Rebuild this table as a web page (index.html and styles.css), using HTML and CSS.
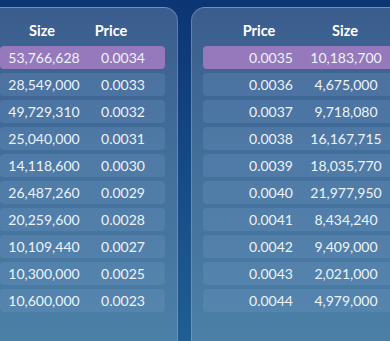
FILE: index.html
```html
<!DOCTYPE html>
<html>
<head>
<meta charset="utf-8">
<link rel="stylesheet" href="styles.css">
</head>
<body>
<div class="board">
  <section class="panel panel-left">
    <div class="head head-left"><span>Size</span><span>Price</span></div>
    <div class="row row-left hl"><span>53,766,628</span><span>0.0034</span></div>
    <div class="row row-left"><span>28,549,000</span><span>0.0033</span></div>
    <div class="row row-left"><span>49,729,310</span><span>0.0032</span></div>
    <div class="row row-left"><span>25,040,000</span><span>0.0031</span></div>
    <div class="row row-left"><span>14,118,600</span><span>0.0030</span></div>
    <div class="row row-left"><span>26,487,260</span><span>0.0029</span></div>
    <div class="row row-left"><span>20,259,600</span><span>0.0028</span></div>
    <div class="row row-left"><span>10,109,440</span><span>0.0027</span></div>
    <div class="row row-left"><span>10,300,000</span><span>0.0025</span></div>
    <div class="row row-left"><span>10,600,000</span><span>0.0023</span></div>
  </section>
  <section class="panel panel-right">
    <div class="head head-right"><span>Price</span><span>Size</span></div>
    <div class="row row-right hl"><span>0.0035</span><span>10,183,700</span></div>
    <div class="row row-right"><span>0.0036</span><span>4,675,000</span></div>
    <div class="row row-right"><span>0.0037</span><span>9,718,080</span></div>
    <div class="row row-right"><span>0.0038</span><span>16,167,715</span></div>
    <div class="row row-right"><span>0.0039</span><span>18,035,770</span></div>
    <div class="row row-right"><span>0.0040</span><span>21,977,950</span></div>
    <div class="row row-right"><span>0.0041</span><span>8,434,240</span></div>
    <div class="row row-right"><span>0.0042</span><span>9,409,000</span></div>
    <div class="row row-right"><span>0.0043</span><span>2,021,000</span></div>
    <div class="row row-right"><span>0.0044</span><span>4,979,000</span></div>
  </section>
</div>
</body>
</html>
```
FILE: styles.css
```css
html, body {
  margin: 0;
  padding: 0;
  width: 390px;
  height: 341px;
  overflow: hidden;
}
body {
  background: linear-gradient(180deg, #0c3573 0%, #164a85 50%, #215e91 100%);
  font-family: Lato, "Open Sans", sans-serif;
  color: #eef3f9;
}
.board {
  display: flex;
  gap: 13px;
  padding-top: 7px;
  margin-left: -14px;
}
.panel {
  flex: none;
  height: 334px;
  box-sizing: border-box;
  border: 1px solid rgba(160, 190, 225, 0.35);
  border-bottom: none;
  background: linear-gradient(180deg, #3b5d8e 0%, #43709c 50%, #4b80a6 100%);
  padding: 0 12px;
  display: flex;
  flex-direction: column;
  gap: 4px;
}
.panel-left {
  width: 192px;
  border-radius: 0 14px 0 0;
  padding-left: 13px;
}
.panel-right {
  width: 216px;
  border-radius: 14px 0 0 0;
  padding-left: 11px;
}
.head {
  display: grid;
  font-weight: 700;
  font-size: 14.5px;
  line-height: 18px;
  padding-top: 14px;
  margin-bottom: 2px;
  text-align: center;
  color: #ffffff;
}
.head-left {
  grid-template-columns: 84px 54px;
}
.head-right {
  padding-left: 30px;
  grid-template-columns: 52px 120px;
}
.row {
  display: grid;
  height: 23px;
  flex: none;
  align-items: center;
  border-radius: 4px;
  background: rgba(120, 160, 205, 0.24);
  font-size: 14px;
  text-align: center;
}
.row-left {
  grid-template-columns: 88px 70px;
}
.row-right {
  padding-left: 30px;
  grid-template-columns: 76px 74px;
}
.row.hl {
  background: #9679bd;
}
```
